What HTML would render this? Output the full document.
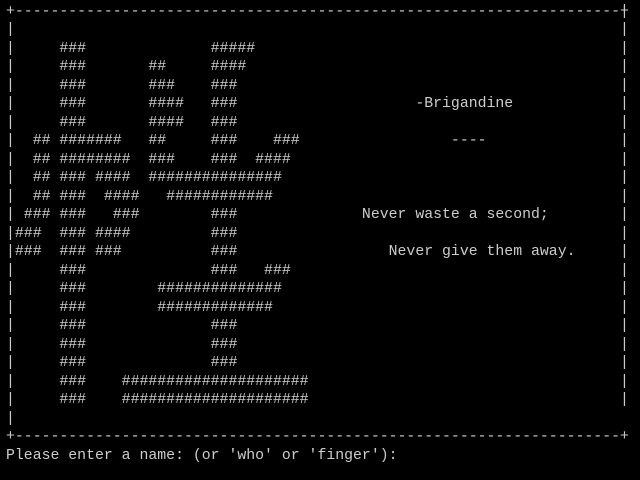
<!DOCTYPE html>
<html><head><meta charset="utf-8"><style>
html,body{margin:0;padding:0;background:#000;width:640px;height:480px;overflow:hidden}
pre{position:absolute;margin:0;top:2.75px;font-family:"Liberation Mono",monospace;font-size:14.83px;line-height:18.5px;color:#cccccc}
#a{left:6px}
#b{left:620px}
</style></head><body>
<pre id="a">+--------------------------------------------------------------------+
|
|     ###              #####
|     ###       ##     ####
|     ###       ###    ###
|     ###       ####   ###                    -Brigandine
|     ###       ####   ###
|  ## #######   ##     ###    ###                 ----
|  ## ########  ###    ###  ####
|  ## ### ####  ###############
|  ## ###  ####   ############
| ### ###   ###        ###              Never waste a second;
|###  ### ####         ###
|###  ### ###          ###                 Never give them away.
|     ###              ###   ###
|     ###        ##############
|     ###        #############
|     ###              ###
|     ###              ###
|     ###              ###
|     ###    #####################
|     ###    #####################
|
+--------------------------------------------------------------------+
Please enter a name: (or 'who' or 'finger'):</pre>
<pre id="b">
|
|
|
|
|
|
|
|
|
|
|
|
|
|
|
|
|
|
|
|
|
|</pre>
</body></html>
